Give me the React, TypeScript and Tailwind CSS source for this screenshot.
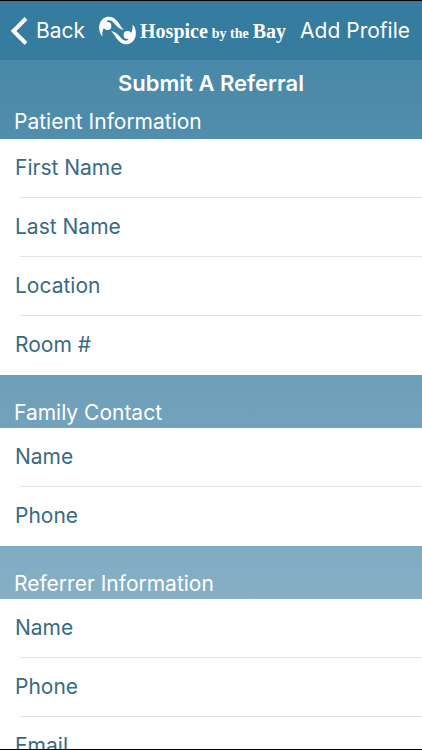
import { useId } from 'react';

type Field = {
  label: string;
  type: string;
};

type Section = {
  title: string;
  fields: Field[];
};

const SECTIONS: Section[] = [
  {
    title: 'Patient Information',
    fields: [
      { label: 'First Name', type: 'text' },
      { label: 'Last Name', type: 'text' },
      { label: 'Location', type: 'text' },
      { label: 'Room #', type: 'text' },
    ],
  },
  {
    title: 'Family Contact',
    fields: [
      { label: 'Name', type: 'text' },
      { label: 'Phone', type: 'tel' },
    ],
  },
  {
    title: 'Referrer Information',
    fields: [
      { label: 'Name', type: 'text' },
      { label: 'Phone', type: 'tel' },
      { label: 'Email', type: 'email' },
    ],
  },
];

// one curled figure with its head; the mark uses it twice
function Figure() {
  return (
    <>
      <path d="M3.500 20.500C0 17.500 -.5 11.500 .8 7.500C2.500 2.500 7.500 -.2 12 1C16.500 2.200 18.800 5.500 21 9C22.500 11.500 23.500 12.500 25 14C21 13.200 18.500 11 16.500 8.700C14.300 6.200 12.500 4.300 10.500 4.300C9 4.300 8 4.600 7.500 6.200L5.500 11C3.800 13.500 3 16.500 3.500 20.500Z" />
      <circle cx="8.500" cy="10" r="3.900" />
    </>
  );
}

function BrandMark() {
  return (
    <svg viewBox="0 0 37 29" className="h-[29px] w-[37px] shrink-0" fill="currentColor" aria-hidden="true">
      <Figure />
      <g transform="rotate(180 18.500 14.500)">
        <Figure />
      </g>
    </svg>
  );
}

function NavBar() {
  return (
    <header className="flex h-[59px] shrink-0 items-center justify-between bg-[#367c9e] pr-3 pl-2.5 text-white">
      <button type="button" className="flex items-center gap-2 leading-7">
        <svg viewBox="0 0 18 28" className="h-7 w-[18px]" fill="none" stroke="currentColor" strokeWidth="4" aria-hidden="true">
          <path d="M16 1.500L3.500 14L16 26.500" />
        </svg>
        Back
      </button>
      <div className="flex items-center gap-1">
        <BrandMark />
        <div className="flex items-baseline gap-1 font-['Liberation_Serif',serif] text-[20px] leading-7 font-bold whitespace-nowrap">
          <span>Hospice</span>
          <span className="text-sm">by the</span>
          <span>Bay</span>
        </div>
      </div>
      <button type="button" className="leading-7 whitespace-nowrap">
        Add Profile
      </button>
    </header>
  );
}

function FieldRow({ label, type }: Field) {
  const id = useId();

  return (
    <div className="relative flex h-[59px] items-center gap-3 px-[15px] pb-0.5 text-[#396a84] after:absolute after:right-0 after:bottom-0 after:left-5 after:h-px after:bg-[#e4e5e6] last:after:hidden">
      <label htmlFor={id} className="shrink-0">
        {label}
      </label>
      <input id={id} type={type} className="h-full min-w-0 flex-1 bg-transparent outline-none" />
    </div>
  );
}

export default function App() {
  return (
    <div className="flex h-screen flex-col overflow-hidden border-y border-black bg-[#367c9e] font-[Inter,sans-serif] text-[21px] leading-7">
      <NavBar />
      <main className="min-h-0 flex-1 overflow-y-auto bg-linear-to-b from-[#4888a8] to-[#97bacd] [scrollbar-width:none]">
        <h1 className="pt-[9px] text-center text-[22px] leading-7 font-semibold text-white">Submit A Referral</h1>
        <form>
          {SECTIONS.map((section, i) => (
            <section key={section.title}>
              <h2 className={`flex items-end px-3.5 text-white ${i === 0 ? 'h-[42px] pb-[3px]' : 'h-[53px] pb-px'}`}>
                {section.title}
              </h2>
              <div className="bg-white">
                {section.fields.map((field) => (
                  <FieldRow key={field.label} {...field} />
                ))}
              </div>
            </section>
          ))}
        </form>
      </main>
    </div>
  );
}
